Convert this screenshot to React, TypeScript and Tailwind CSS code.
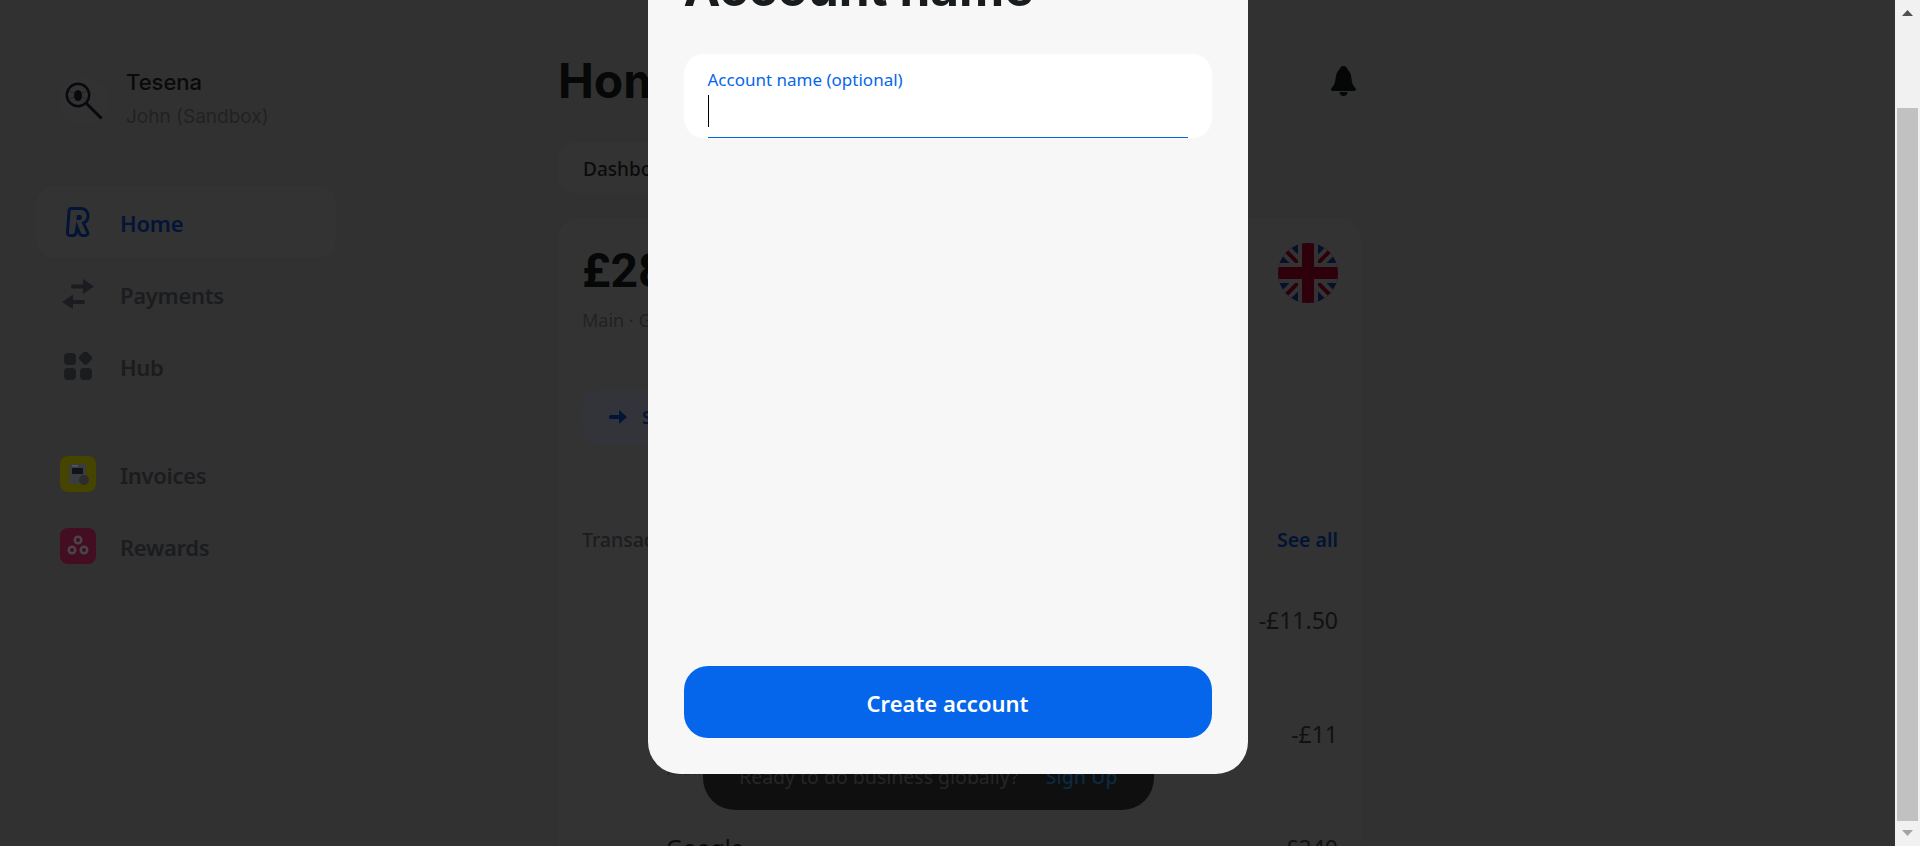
const sans = "font-['Noto_Sans',sans-serif]";

function LogoIcon() {
  return (
    <svg width="46" height="46" viewBox="0 0 46 46" fill="none">
      <circle cx="23" cy="23" r="22.5" fill="#323232" stroke="#353535" />
      <circle cx="17" cy="17" r="11.2" stroke="#08090c" strokeWidth="2.4" />
      <path d="M25 25L40.5 40.5" stroke="#08090c" strokeWidth="3" />
      <ellipse cx="17" cy="17.5" rx="4" ry="5.5" fill="#08090c" />
      <path d="M8 13l5 2M8 21l5-2M26 13l-5 2M26 21l-5-2" stroke="#242424" strokeWidth="1" />
    </svg>
  );
}

function RevolutIcon() {
  return (
    <svg width="24" height="30" viewBox="0 0 24 30" fill="none">
      <path
        d="M5 1.5H15C20 1.5 22.5 5.5 22 10C21.6 13 20 15 17.5 16L21.5 25C22.5 27.5 21 28.5 18.5 28.5H16.5C14.8 28.5 14.2 28 13.4 26L11 20L10 26C9.7 28 8.5 28.5 6.5 28.5H4C2 28.5 1.3 27.5 1.5 25L3 4.5C3.1 2.5 3.8 1.5 5 1.5Z"
        stroke="#021536"
        strokeWidth="3"
      />
      <path d="M11 8L10.4 13H13.2C15 13 16 12 16 10.5C16 9 15 8 13.6 8Z" fill="#021536" />
    </svg>
  );
}

function PaymentsIcon() {
  return (
    <svg width="32" height="30" viewBox="0 0 32 30" fill="#1a1c1f">
      <path d="M21 0L32 7.5L21 15Z" />
      <rect x="9" y="5.5" width="14" height="4" rx="2" />
      <path d="M11 15.5L0 23L11 30Z" />
      <rect x="9" y="21" width="14" height="4" rx="2" />
    </svg>
  );
}

function HubIcon() {
  return (
    <svg width="28" height="28" viewBox="0 0 28 28" fill="#1a1c1f">
      <rect x="0" y="1" width="12" height="12" rx="4" />
      <rect x="16" y="0.5" width="11" height="11" rx="3" transform="rotate(45 21.5 6)" />
      <rect x="0" y="16" width="12" height="12" rx="4" />
      <rect x="16" y="16" width="12" height="12" rx="4" />
    </svg>
  );
}

function InvoicesIcon() {
  return (
    <svg width="36" height="36" viewBox="0 0 36 36">
      <rect width="36" height="36" rx="8" fill="#454500" />
      <rect x="9" y="8" width="17" height="20" rx="2" fill="#3a3c40" />
      <rect x="12" y="12" width="11" height="6" fill="#121316" />
      <rect x="12" y="9" width="6" height="1.5" fill="#55575a" />
      <circle cx="24" cy="24" r="5" fill="#2b2d31" />
    </svg>
  );
}

function RewardsIcon() {
  return (
    <svg width="36" height="36" viewBox="0 0 36 36">
      <rect width="36" height="36" rx="8" fill="#430d22" />
      <circle cx="18" cy="12" r="4.5" fill="#4a4444" />
      <circle cx="12" cy="22" r="4.5" fill="#4a4444" />
      <circle cx="24" cy="22" r="4.5" fill="#4a4444" />
      <circle cx="18" cy="12" r="2" fill="#430d22" />
      <circle cx="12" cy="22" r="2" fill="#430d22" />
      <circle cx="24" cy="22" r="2" fill="#430d22" />
    </svg>
  );
}

function UkFlag() {
  return (
    <svg width="60" height="60" viewBox="0 0 60 60">
      <defs>
        <clipPath id="flagClip">
          <circle cx="30" cy="30" r="30" />
        </clipPath>
      </defs>
      <g clipPath="url(#flagClip)">
        <rect width="60" height="60" fill="#071028" />
        <path d="M0 0L60 60M60 0L0 60" stroke="#333333" strokeWidth="12" />
        <path d="M0 0L60 60M60 0L0 60" stroke="#2e000c" strokeWidth="4" />
        <rect x="20" width="20" height="60" fill="#333333" />
        <rect y="20" width="60" height="20" fill="#333333" />
        <rect x="24" width="12" height="60" fill="#2e000c" />
        <rect y="24" width="60" height="12" fill="#2e000c" />
      </g>
    </svg>
  );
}

function BellIcon() {
  return (
    <svg width="25" height="30" viewBox="0 0 25 30" fill="#050606">
      <path d="M12.5 0C15 0 16 2 17 4C19.5 6 20 9 20.5 13C21 18 22.5 20 24.5 22C25.5 23.5 24.5 25 23 25H2C0.5 25 -0.5 23.5 0.5 22C2.5 20 4 18 4.5 13C5 9 5.5 6 8 4C9 2 10 0 12.5 0Z" />
      <path d="M8.5 26H16.5C16.5 28.5 14.5 30 12.5 30C10.5 30 8.5 28.5 8.5 26Z" />
    </svg>
  );
}

function NavItem({ icon, label, active }: { icon: React.ReactNode; label: string; active?: boolean }) {
  return (
    <div
      className={
        active
          ? "flex h-[72px] w-[300px] items-center rounded-[18px] bg-[#333333]"
          : "flex h-[72px] w-[300px] items-center rounded-[18px]"
      }
    >
      <div className="flex w-[84px] shrink-0 justify-center">{icon}</div>
      <span
        className={
          active
            ? "pt-[3px] text-[22px] font-semibold tracking-[-0.2px] text-[#021536]"
            : "pt-[3px] text-[22px] font-semibold tracking-[-0.3px] text-[#1a1c1f]"
        }
      >
        {label}
      </span>
    </div>
  );
}

function TransactionRow({ name, sub, amount }: { name: string; sub?: string; amount: string }) {
  return (
    <div className="flex h-[114px] items-start justify-between">
      <div className="pl-[84px]">
        <div className="text-[23px] leading-[32px] text-[#0a0b0c]">{name}</div>
        {sub && <div className="mt-[6px] text-[18px] leading-[24px] text-[#222222]">{sub}</div>}
      </div>
      <span className="text-[23px] leading-[32px] text-[#101112]">{amount}</span>
    </div>
  );
}

export default function App() {
  return (
    <div className={`flex h-screen overflow-hidden bg-[#313131] ${sans}`}>
      <div className="relative flex min-w-0 flex-1">
        {/* sidebar */}
        <aside className="w-[558px] shrink-0 pl-[36px]">
          <div className="flex items-center pl-[25px] pt-[66px]">
            <LogoIcon />
            <div className="ml-[19px]">
              <div className="font-['Inter',sans-serif] text-[22px] font-medium leading-[32px] text-[#0a0a0a]">Tesena</div>
              <div className="font-['Inter',sans-serif] text-[19px] leading-[38px] text-[#222222]">John (Sandbox)</div>
            </div>
          </div>
          <nav className="mt-[50px]">
            <NavItem active icon={<RevolutIcon />} label="Home" />
            <NavItem icon={<PaymentsIcon />} label="Payments" />
            <NavItem icon={<HubIcon />} label="Hub" />
            <div className="mt-[36px]">
              <NavItem icon={<InvoicesIcon />} label="Invoices" />
              <NavItem icon={<RewardsIcon />} label="Rewards" />
            </div>
          </nav>
        </aside>

        {/* main column */}
        <main className="w-[803px] shrink-0 pt-[49px]">
          <div className="flex h-[64px] items-center justify-between pr-[5px]">
            <h1 className="font-['Inter',sans-serif] text-[48px] font-bold text-[#060707]">Home</h1>
            <BellIcon />
          </div>
          <div className="mt-[29px] flex h-[51px] w-[400px] items-center rounded-[16px] bg-[#333333] pl-[25px] pt-[4px]">
            <span className="text-[19px] font-medium text-[#0a0b0c]">Dashboard</span>
          </div>
          <section className="mt-[25px] h-[700px] rounded-[20px] bg-[#333333] pl-[24px] pr-[23px] pt-[25px]">
            <div className="flex items-start justify-between">
              <div>
                <div className="font-['Roboto',sans-serif] text-[48px] font-bold leading-[56px] text-[#060707]">£28</div>
                <div className="mt-[8px] text-[18px] leading-[26px] text-[#222222]">Main · GBP</div>
              </div>
              <UkFlag />
            </div>
            <div className="mt-[57px] flex h-[54px] w-[200px] items-center gap-[15px] rounded-[16px] bg-[#32343a] px-[27px]">
              <svg width="18" height="14" viewBox="0 0 18 14" fill="#021536">
                <rect x="0" y="5" width="12" height="4" rx="2" />
                <path d="M10 0L18 7L10 14Z" />
              </svg>
              <span className="text-[18px] font-semibold text-[#021536]">Send</span>
            </div>
            <div className="mt-[81px] flex items-center justify-between">
              <span className="text-[19.5px] font-medium text-[#1a1c1f]">Transactions</span>
              <span className="text-[19.5px] font-semibold text-[#021433]">See all</span>
            </div>
            <div className="mt-[50px]">
              <TransactionRow name="Amazon" amount="-£11.50" />
              <TransactionRow name="Uber" sub="Main" amount="-£11" />
              <TransactionRow name="Google" amount="-£240" />
            </div>
          </section>
        </main>

        {/* sign up toast */}
        <div className="absolute left-[703px] top-[730px] flex h-[80px] w-[451px] items-center gap-[27px] rounded-[32px] bg-[#0f0f0f] pl-[36px] pt-[14px]">
          <span className="text-[19.5px] text-[#262626]">Ready to do business globally?</span>
          <span className="text-[19.5px] font-medium text-[#0b2a40]">Sign Up</span>
        </div>

        {/* modal */}
        <div className="absolute inset-0 flex justify-center">
          <div className="mt-[-60px] flex h-[834px] w-[600px] flex-col rounded-[32px] bg-[#f7f7f7] px-[36px] pb-[36px] pt-[20px]">
            <h2 className="font-['Inter',sans-serif] text-[49.5px] font-bold leading-[56px] text-[#191c1f]">Account name</h2>
            <div className="mt-[38px] h-[84px] rounded-[20px] bg-white px-[24px] pt-[14px]">
              <div className="text-[17px] leading-[24px] text-[#0666eb]">Account name (optional)</div>
              <div className="h-[46px] border-b border-[#0666eb] pt-[3px]">
                <div className="h-[32px] w-px bg-black" />
              </div>
            </div>
            <div className="flex-1" />
            <button className="h-[72px] w-full rounded-[24px] bg-[#0666eb] pt-[3px] text-[22px] font-semibold text-white">
              Create account
            </button>
          </div>
        </div>
      </div>

      {/* page scrollbar */}
      <div className="flex w-[25px] shrink-0 flex-col items-center bg-[#f1f1f1]">
        <div className="flex h-[108px] w-full justify-center pt-[10px]">
          <svg width="11" height="6" viewBox="0 0 11 6" fill="#505050">
            <path d="M5.5 0L11 6H0Z" />
          </svg>
        </div>
        <div className="h-[713px] w-[21px] bg-[#c1c1c1]" />
        <div className="flex w-full justify-center pt-[9px]">
          <svg width="11" height="6" viewBox="0 0 11 6" fill="#a3a3a3">
            <path d="M5.5 6L11 0H0Z" />
          </svg>
        </div>
      </div>
    </div>
  );
}
